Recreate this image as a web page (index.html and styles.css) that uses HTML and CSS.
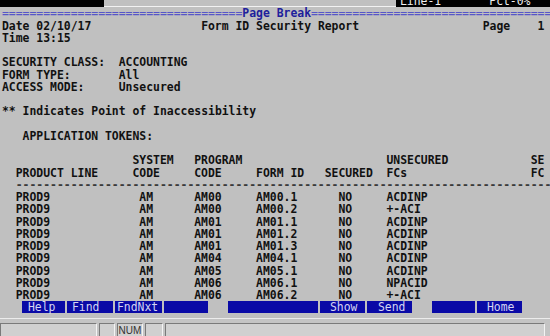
FILE: index.html
```html
<!DOCTYPE html>
<html>
<head>
<meta charset="utf-8">
<title>Form ID Security Report</title>
<link rel="stylesheet" href="styles.css">
</head>
<body>
<div class="screen">
  <div class="topbar">
    <span class="tb-left"></span>
    <span class="tb-mid"></span>
    <span class="tb-right">Line-1       Pct-0%</span>
  </div>
  <div class="ln rule">
    <span class="eq">===================================</span><span class="pb">Page Break</span><span class="eq">===================================</span>
  </div>
  <div class="ln title">
    <span>Date 02/10/17</span><span>Form ID Security Report</span><span>Page</span><span>1</span>
  </div>
  <div class="ln">Time 13:15</div>
  <div class="ln"></div>
  <div class="ln kv"><span>SECURITY CLASS:</span><span>ACCOUNTING</span></div>
  <div class="ln kv"><span>FORM TYPE:</span><span>All</span></div>
  <div class="ln kv"><span>ACCESS MODE:</span><span>Unsecured</span></div>
  <div class="ln"></div>
  <div class="ln">** Indicates Point of Inaccessibility</div>
  <div class="ln"></div>
  <div class="ln indent3">APPLICATION TOKENS:</div>
  <div class="ln"></div>

  <div class="ln trow"><span></span><span>SYSTEM</span><span>PROGRAM</span><span></span><span></span><span>UNSECURED</span><span>SE</span></div>
  <div class="ln trow"><span>PRODUCT LINE</span><span>CODE</span><span>CODE</span><span>FORM ID</span><span>SECURED</span><span>FCs</span><span>FC</span></div>
  <div class="ln dashes">------------------------------------------------------------------------------</div>

  <div class="ln trow"><span>PROD9</span><span class="sys">AM</span><span>AM00</span><span>AM00.1</span><span class="sec">NO</span><span>ACDINP</span><span></span></div>
  <div class="ln trow"><span>PROD9</span><span class="sys">AM</span><span>AM00</span><span>AM00.2</span><span class="sec">NO</span><span>+-ACI</span><span></span></div>
  <div class="ln trow"><span>PROD9</span><span class="sys">AM</span><span>AM01</span><span>AM01.1</span><span class="sec">NO</span><span>ACDINP</span><span></span></div>
  <div class="ln trow"><span>PROD9</span><span class="sys">AM</span><span>AM01</span><span>AM01.2</span><span class="sec">NO</span><span>ACDINP</span><span></span></div>
  <div class="ln trow"><span>PROD9</span><span class="sys">AM</span><span>AM01</span><span>AM01.3</span><span class="sec">NO</span><span>ACDINP</span><span></span></div>
  <div class="ln trow"><span>PROD9</span><span class="sys">AM</span><span>AM04</span><span>AM04.1</span><span class="sec">NO</span><span>ACDINP</span><span></span></div>
  <div class="ln trow"><span>PROD9</span><span class="sys">AM</span><span>AM05</span><span>AM05.1</span><span class="sec">NO</span><span>ACDINP</span><span></span></div>
  <div class="ln trow"><span>PROD9</span><span class="sys">AM</span><span>AM06</span><span>AM06.1</span><span class="sec">NO</span><span>NPACID</span><span></span></div>
  <div class="ln trow"><span>PROD9</span><span class="sys">AM</span><span>AM06</span><span>AM06.2</span><span class="sec">NO</span><span>+-ACI</span><span></span></div>

  <div class="ln fkeys">
    <span class="fk k-help">Help</span>
    <span class="fk k-find">Find</span>
    <span class="fk k-fndnxt">FndNxt</span>
    <span class="fk k-b1"></span>
    <span class="fk k-b2"></span>
    <span class="fk k-show">Show</span>
    <span class="fk k-send">Send</span>
    <span class="fk k-b3"></span>
    <span class="fk k-home">Home</span>
  </div>
</div>
<div class="status">
  <span class="sb sb1"></span>
  <span class="sb sb2"></span>
  <span class="sb sb3">NUM</span>
  <span class="sb sb4"></span>
  <span class="sb sb5"></span>
</div>
</body>
</html>
```
FILE: styles.css
```css
html, body {
  margin: 0;
  padding: 0;
}
body {
  width: 550px;
  height: 336px;
  overflow: hidden;
  background: #c0c0c0;
  color: #111;
  font-family: "DejaVu Sans Mono", "Liberation Mono", monospace;
  font-weight: bold;
  font-size: 11.42px;
}
.screen {
  margin-top: -5px;
  padding-left: 2px;
  width: 548px;
}
.ln {
  height: 12.25px;
  line-height: 12.25px;
  white-space: pre;
}

/* top status row of the emulator (partially scrolled off) */
.topbar {
  display: flex;
  height: 12.25px;
  line-height: 12.25px;
  margin-left: -2px;
  width: 550px;
}
.tb-left {
  width: 104px;
  background: #000;
}
.tb-mid {
  flex: 1;
  border-bottom: 1px solid #f2f2f2;
  box-sizing: border-box;
}
.tb-right {
  width: 150px;
  padding-left: 4px;
  background: #000;
  color: #f0f0f0;
  white-space: pre;
  font-weight: normal;
}

/* page break rule */
.rule {
  display: flex;
}
.eq {
  width: 35ch;
  color: #5656c8;
  font-weight: normal;
}
.pb {
  width: 10ch;
  color: #20209c;
}

.title {
  display: grid;
  grid-template-columns: 29ch 41ch 8ch 2ch;
}
.kv {
  display: grid;
  grid-template-columns: 17ch 1fr;
}
.indent3 {
  padding-left: 3ch;
}

/* table */
.trow {
  display: grid;
  grid-template-columns: 17ch 9ch 9ch 10ch 9ch 21ch 3ch;
  padding-left: 2ch;
}
.sys {
  padding-left: 1ch;
}
.sec {
  padding-left: 2ch;
}
.dashes {
  padding-left: 2ch;
  color: #3a3a3a;
}

/* function key bar */
.fkeys {
  display: flex;
  padding-left: 20px;
}
.fk {
  display: block;
  height: 12px;
  background: #0a0aa6;
  color: #d4d4f2;
  font-weight: normal;
  box-sizing: border-box;
  margin-left: 2px;
}
.k-help { width: 43px; margin-left: 0; padding-left: 6px; }
.k-find { width: 46px; padding-left: 5px; }
.k-fndnxt { width: 47px; padding-left: 2px; }
.k-b1 { width: 44px; }
.k-b2 { width: 90px; margin-left: 20px; }
.k-show { width: 45px; padding-left: 10px; }
.k-send { width: 45px; padding-left: 11px; }
.k-b3 { width: 43px; margin-left: 20px; }
.k-home { width: 45px; padding-left: 10px; }

/* window status bar */
.status {
  display: flex;
  margin-top: 4px;
  border-top: 1px solid #ececec;
  padding-top: 4px;
  height: 20px;
  box-sizing: border-box;
  background: #c4c4c4;
  font-family: "Liberation Sans", Arial, sans-serif;
  font-weight: normal;
  font-size: 10px;
  color: #333;
}
.sb {
  display: block;
  height: 16px;
  box-sizing: border-box;
  border-top: 1px solid #7a7a7a;
  border-left: 1px solid #7a7a7a;
  border-right: 1px solid #f4f4f4;
  background: #d0d0d0;
  margin-right: 2px;
  line-height: 13px;
  text-align: center;
}
.sb1 { width: 97px; }
.sb2 { width: 16px; }
.sb3 { width: 26px; }
.sb4 { width: 18px; }
.sb5 { width: 380px; }
```
